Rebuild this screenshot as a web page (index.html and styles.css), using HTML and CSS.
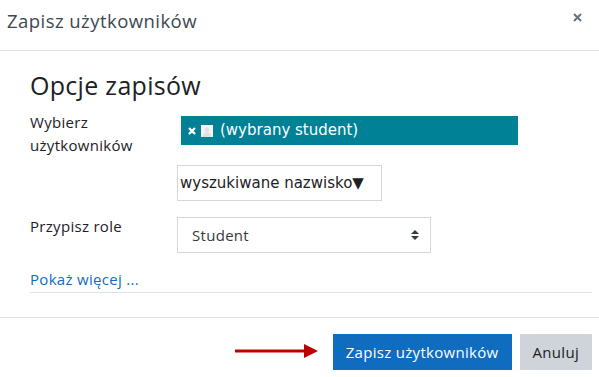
FILE: index.html
```html
<!DOCTYPE html>
<html>
<head>
    <title>Zapisz użytkowników</title>
    <link rel="stylesheet" href="styles.css">
</head>
<body>
    <div class="modal">
        <div class="modal-header">
            <h5 class="modal-title">Zapisz użytkowników</h5>
            <button class="close" aria-label="Zamknij">
                <svg width="9" height="9" viewBox="0 0 9 9"><path d="M1 1L8 8M8 1L1 8" stroke="#6a737b" stroke-width="2"/></svg>
            </button>
        </div>

        <div class="modal-body">
            <h3 class="section-title">Opcje zapisów</h3>

            <div class="form-row">
                <label class="col-label">Wybierz<br>użytkowników</label>
                <div class="col-field">
                    <div class="selection">
                        <span class="chip">
                            <svg class="chip-x" width="8" height="8" viewBox="0 0 8 8"><path d="M1 1L7 7M7 1L1 7" stroke="#fff" stroke-width="2.2"/></svg>
                            <svg class="chip-pic" width="12" height="12" viewBox="0 0 12 12">
                                <rect width="12" height="12" fill="#f4f4f4"/>
                                <circle cx="6" cy="5" r="2.4" fill="#e2e2e2"/>
                                <path d="M1.5 12c0-3 2-4.4 4.5-4.4s4.5 1.4 4.5 4.4z" fill="#e2e2e2"/>
                            </svg>
                            (wybrany student)
                        </span>
                    </div>
                    <div class="search">wyszukiwane nazwisko▼</div>
                </div>
            </div>

            <div class="form-row">
                <label class="col-label role-label">Przypisz role</label>
                <div class="col-field">
                    <div class="select">
                        <span>Student</span>
                        <svg width="8" height="10" viewBox="0 0 4 5"><path d="M2 0L0 2h4zm0 5L0 3h4z" fill="#343a40"/></svg>
                    </div>
                </div>
            </div>

            <div class="more"><a href="#">Pokaż więcej ...</a></div>
        </div>

        <div class="modal-footer">
            <svg class="arrow" width="83" height="14" viewBox="0 0 83 14">
                <rect x="0" y="5.5" width="71" height="3" fill="#c00000"/>
                <polygon points="69,0 83,7 69,14" fill="#c00000"/>
            </svg>
            <button class="btn btn-primary">Zapisz użytkowników</button>
            <button class="btn btn-secondary">Anuluj</button>
        </div>
    </div>
</body>
</html>
```

FILE: styles.css
```css
body {
    margin: 0;
    font-family: "Open Sans", Arial, sans-serif;
    font-size: 15px;
    line-height: 22.5px;
    letter-spacing: 0.3px;
    color: #1d2125;
    background-color: #ffffff;
}
.modal {
    width: 599px;
    height: 377px;
    overflow: hidden;
}
.modal-header {
    height: 50px;
    border-bottom: 1px solid #dee2e6;
    display: flex;
    align-items: flex-start;
    justify-content: space-between;
    padding: 0 17px 0 7px;
}
.modal-title {
    margin: 10px 0 0 0;
    font-size: 18.5px;
    line-height: 22px;
    font-weight: 400;
    letter-spacing: 0.45px;
    color: #3d4852;
}
.close {
    margin-top: 13px;
    padding: 0;
    border: none;
    background: none;
    width: 9px;
    height: 9px;
    cursor: pointer;
}
.close svg {
    display: block;
}
.modal-body {
    padding: 0 7px 24px 30px;
}
.section-title {
    margin: 19px 0 0 0;
    font-size: 25px;
    line-height: 30px;
    font-weight: 400;
    color: #1d2125;
}
.form-row {
    display: flex;
    align-items: flex-start;
    margin-top: 8px;
}
.form-row + .form-row {
    margin-top: 16px;
}
.col-label {
    width: 147px;
    flex-shrink: 0;
    padding-top: 3px;
}
.role-label {
    padding-top: 0;
    margin-top: -2px;
}
.col-field {
    display: flex;
    flex-direction: column;
    align-items: flex-start;
}
.selection {
    margin-top: 8px;
    padding-left: 4px;
}
.chip {
    display: flex;
    align-items: center;
    width: 337px;
    height: 29px;
    box-sizing: border-box;
    padding-left: 7px;
    background-color: #008196;
    color: #ffffff;
    font-family: "DejaVu Sans", Verdana, sans-serif;
    font-size: 15px;
    letter-spacing: 0;
}
.chip-x {
    margin-right: 5px;
}
.chip-pic {
    margin-right: 7px;
}
.search {
    margin-top: 20px;
    width: 205px;
    height: 36px;
    box-sizing: border-box;
    border: 1px solid #d3d7dc;
    padding-left: 2px;
    display: flex;
    align-items: center;
    font-family: "DejaVu Sans", Verdana, sans-serif;
    font-size: 15px;
    letter-spacing: 0;
    color: #1d2125;
}
.select {
    width: 254px;
    height: 36px;
    box-sizing: border-box;
    border: 1px solid #d3d7dc;
    padding: 0 11px 0 14px;
    display: flex;
    align-items: center;
    justify-content: space-between;
    color: #343a40;
}
.more {
    margin-top: 15px;
    padding-bottom: 1px;
    border-bottom: 1px solid #dee2e6;
}
.more a {
    color: #0f6cbf;
    text-decoration: none;
}
.modal-footer {
    border-top: 1px solid #dee2e6;
    display: flex;
    align-items: flex-start;
    justify-content: flex-end;
    padding: 16px 7px 0 0;
}
.arrow {
    margin: 10px 15px 0 0;
}
.btn {
    height: 36px;
    padding: 0 13px;
    border: none;
    font-family: "Open Sans", Arial, sans-serif;
    font-size: 15px;
    letter-spacing: 0.3px;
    cursor: pointer;
}
.btn-primary {
    background-color: #0f6cbf;
    color: #ffffff;
}
.btn-secondary {
    margin-left: 8px;
    background-color: #ced4da;
    color: #1d2125;
}
```
